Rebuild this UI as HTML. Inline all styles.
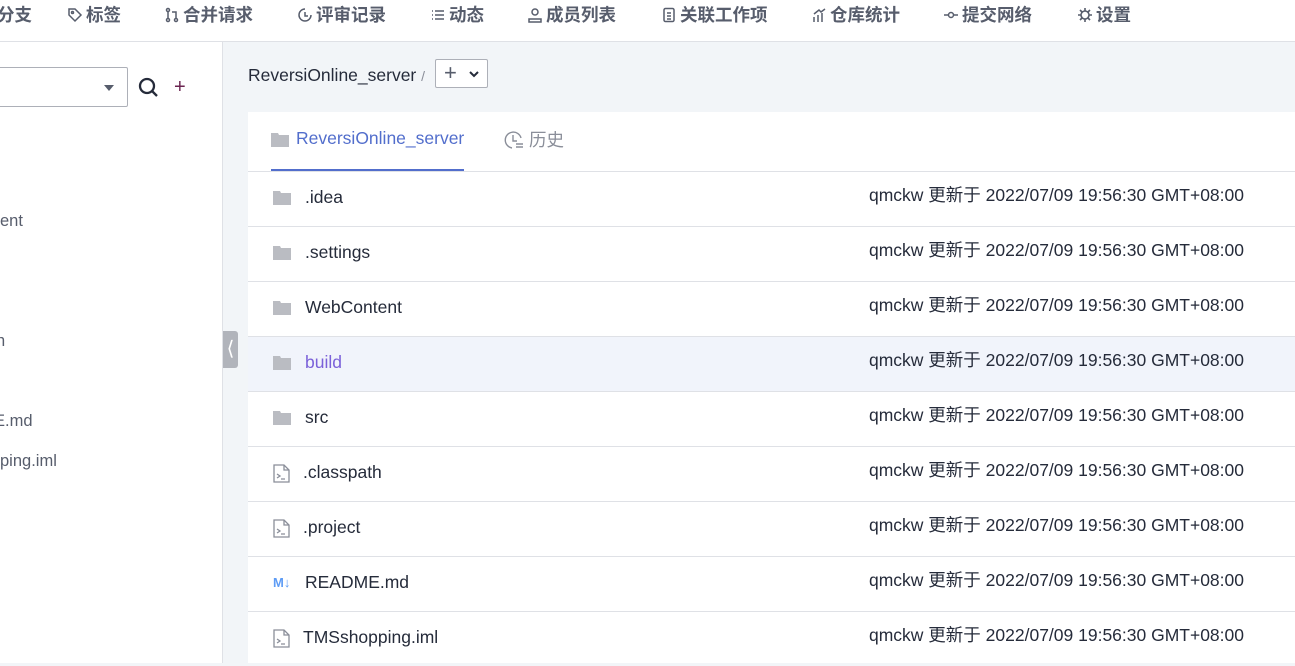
<!DOCTYPE html>
<html><head><meta charset="utf-8"><style>
*{margin:0;padding:0;box-sizing:border-box}
body{width:1295px;height:663px;overflow:hidden;background:#f2f5f8;font-family:"Liberation Sans","Noto Sans CJK SC",sans-serif;position:relative;color:#252b3a}
.nav{position:absolute;left:0;top:0;width:1295px;height:42px;background:#fff;border-bottom:1px solid #dfe1e6}
.ni{position:absolute;top:2px;font-size:17.5px;font-weight:bold;color:#575d6c;display:flex;align-items:center;gap:3px;white-space:nowrap}
.ni svg{width:16px;height:16px}
.left{position:absolute;left:0;top:42px;width:223px;height:621px;background:#fff;border-right:1px solid #dfe1e6}
.lt{position:absolute;font-size:16.5px;color:#575d6c}
.card{position:absolute;left:248px;top:112px;width:1047px;height:551px;background:#fff}
.row{position:absolute;left:0;width:1047px;height:55px;border-top:1px solid #dfe1e6}
.row .nm{position:absolute;left:57px;top:15px;font-size:17.5px;color:#252b3a}
.row .dt{position:absolute;left:621px;top:10px;font-size:17.5px;color:#252b3a}
.row .ic{position:absolute;left:25px;top:18px}
</style></head><body>
<div class="nav">
<div class="ni" style="left:-3px">分支</div>
<div class="ni" style="left:67px"><svg viewBox="0 0 16 16" fill="none" stroke="#575d6c" stroke-width="1.5"><path d="M2 2h6l6 6-6 6-6-6z"/><circle cx="5.5" cy="5.5" r="1"/></svg>标签</div>
<div class="ni" style="left:164px"><svg viewBox="0 0 16 16" fill="none" stroke="#575d6c" stroke-width="1.5"><circle cx="4" cy="3" r="1.5"/><circle cx="4" cy="13" r="1.5"/><circle cx="12" cy="13" r="1.5"/><path d="M4 5v6M12 11V5H8"/></svg>合并请求</div>
<div class="ni" style="left:297px"><svg viewBox="0 0 16 16" fill="none" stroke="#575d6c" stroke-width="1.5"><path d="M14 8A6 6 0 1 1 8 2"/><path d="M8 5v4h3"/></svg>评审记录</div>
<div class="ni" style="left:430px"><svg viewBox="0 0 16 16" fill="none" stroke="#575d6c" stroke-width="1.5"><path d="M2 4h1M2 8h1M2 12h1M5 4h9M5 8h9M5 12h9"/></svg>动态</div>
<div class="ni" style="left:527px"><svg viewBox="0 0 16 16" fill="none" stroke="#575d6c" stroke-width="1.5"><circle cx="8" cy="5" r="3"/><path d="M2 15v-3h12v3z"/></svg>成员列表</div>
<div class="ni" style="left:661px"><svg viewBox="0 0 16 16" fill="none" stroke="#575d6c" stroke-width="1.5"><rect x="3" y="1.5" width="10" height="13" rx="1.5"/><path d="M6 6h4M6 9h4M6 12h4"/></svg>关联工作项</div>
<div class="ni" style="left:811px"><svg viewBox="0 0 16 16" fill="none" stroke="#575d6c" stroke-width="1.5"><path d="M3 15v-5M7 15V8M11 15V6M3 7l5-4 2 2 4-3"/></svg>仓库统计</div>
<div class="ni" style="left:943px"><svg viewBox="0 0 16 16" fill="none" stroke="#575d6c" stroke-width="1.5"><circle cx="8" cy="8" r="2.5"/><path d="M1 8h4.5M10.5 8H15"/></svg>提交网络</div>
<div class="ni" style="left:1077px"><svg viewBox="0 0 16 16" fill="none" stroke="#575d6c" stroke-width="1.6"><circle cx="8" cy="8" r="4"/><path d="M8 1v3M8 12v3M1 8h3M12 8h3M3 3l2 2M11 11l2 2M3 13l2-2M11 5l2-2"/></svg>设置</div>
</div>
<div class="left">
<div style="position:absolute;left:-5px;top:25px;width:133px;height:40px;border:1px solid #adb0b8;border-radius:2px"></div>
<div style="position:absolute;left:104px;top:43px;border-left:5px solid transparent;border-right:5px solid transparent;border-top:6px solid #575d6c"></div>
<svg style="position:absolute;left:138px;top:35px" width="22" height="22" viewBox="0 0 22 22" fill="none" stroke="#252b3a" stroke-width="2.3"><circle cx="9" cy="9" r="7"/><path d="M14 14l5 5"/></svg>
<div style="position:absolute;left:174px;top:34px;font-size:20px;color:#6b2450">+</div>
<div class="lt" style="left:0;top:170px">ent</div>
<div class="lt" style="left:-4px;top:290px">n</div>
<div class="lt" style="left:-6px;top:370px">E.md</div>
<div class="lt" style="left:0;top:410px">ping.iml</div>
</div>
<div style="position:absolute;left:223px;top:331px;width:15px;height:37px;background:#b1b4bb;border-radius:0 3px 3px 0;color:#fff;font-size:20px;line-height:37px;text-align:center">&#10216;</div>
<div style="position:absolute;left:248px;top:65px;font-size:17.5px;color:#252b3a">ReversiOnline_server <span style="color:#8a8e99;font-size:14px">/</span></div>
<div style="position:absolute;left:435px;top:59px;width:53px;height:29px;border:1px solid #adb0b8;border-radius:2px;background:#fff;font-size:22px;line-height:26px;padding-left:8px;color:#575d6c">+<svg style="position:absolute;left:33px;top:10px" width="10" height="8" viewBox="0 0 10 8" fill="none" stroke="#252b3a" stroke-width="2"><path d="M1 2l4 4 4-4"/></svg></div>
<div class="card">
<svg style="position:absolute;left:23px;top:20px" width="18" height="15" viewBox="0 0 18 15"><path d="M0 1h7l1 2h10v12H0z" fill="#babcc2"/></svg>
<div style="position:absolute;left:48px;top:16px;font-size:17.5px;color:#526ecc">ReversiOnline_server</div>
<div style="position:absolute;left:23px;top:57px;width:193px;height:2px;background:#526ecc"></div>
<svg style="position:absolute;left:255px;top:17px" width="22" height="22" viewBox="0 0 22 22" fill="none" stroke="#8a8e99" stroke-width="1.4"><path d="M18 9A8 8 0 1 0 9 19"/><path d="M10 6v6h4M13 15h7M13 18h7"/></svg>
<div style="position:absolute;left:281px;top:15px;font-size:17.5px;color:#8a8e99">历史</div>
<div class="row" style="top:59px"><svg class="ic" width="18" height="15" viewBox="0 0 18 15"><path d="M0 1h7l1 2h10v12H0z" fill="#babcc2"/></svg><div class="nm">.idea</div><div class="dt">qmckw 更新于 2022/07/09 19:56:30 GMT+08:00</div></div>
<div class="row" style="top:114px"><svg class="ic" width="18" height="15" viewBox="0 0 18 15"><path d="M0 1h7l1 2h10v12H0z" fill="#babcc2"/></svg><div class="nm">.settings</div><div class="dt">qmckw 更新于 2022/07/09 19:56:30 GMT+08:00</div></div>
<div class="row" style="top:169px"><svg class="ic" width="18" height="15" viewBox="0 0 18 15"><path d="M0 1h7l1 2h10v12H0z" fill="#babcc2"/></svg><div class="nm">WebContent</div><div class="dt">qmckw 更新于 2022/07/09 19:56:30 GMT+08:00</div></div>
<div class="row" style="top:224px;background:#f1f4fb"><svg class="ic" width="18" height="15" viewBox="0 0 18 15"><path d="M0 1h7l1 2h10v12H0z" fill="#babcc2"/></svg><div class="nm" style="color:#7b61d9">build</div><div class="dt">qmckw 更新于 2022/07/09 19:56:30 GMT+08:00</div></div>
<div class="row" style="top:279px"><svg class="ic" width="18" height="15" viewBox="0 0 18 15"><path d="M0 1h7l1 2h10v12H0z" fill="#babcc2"/></svg><div class="nm">src</div><div class="dt">qmckw 更新于 2022/07/09 19:56:30 GMT+08:00</div></div>
<div class="row" style="top:334px"><svg class="ic" style="top:17px" width="17" height="19" viewBox="0 0 17 19" fill="none" stroke="#8a8e99" stroke-width="1.3"><path d="M1 1h10l5 5v12H1z"/><path d="M11 1v5h5M4 10l3 2-3 2M8 15h4"/></svg><div class="nm" style="left:55px">.classpath</div><div class="dt">qmckw 更新于 2022/07/09 19:56:30 GMT+08:00</div></div>
<div class="row" style="top:389px"><svg class="ic" style="top:17px" width="17" height="19" viewBox="0 0 17 19" fill="none" stroke="#8a8e99" stroke-width="1.3"><path d="M1 1h10l5 5v12H1z"/><path d="M11 1v5h5M4 10l3 2-3 2M8 15h4"/></svg><div class="nm" style="left:55px">.project</div><div class="dt">qmckw 更新于 2022/07/09 19:56:30 GMT+08:00</div></div>
<div class="row" style="top:444px"><div style="position:absolute;left:25px;top:18px;font-size:13px;font-weight:bold;color:#5e9cf5">M&#8595;</div><div class="nm">README.md</div><div class="dt">qmckw 更新于 2022/07/09 19:56:30 GMT+08:00</div></div>
<div class="row" style="top:499px"><svg class="ic" style="top:17px" width="17" height="19" viewBox="0 0 17 19" fill="none" stroke="#8a8e99" stroke-width="1.3"><path d="M1 1h10l5 5v12H1z"/><path d="M11 1v5h5M4 10l3 2-3 2M8 15h4"/></svg><div class="nm" style="left:55px">TMSshopping.iml</div><div class="dt">qmckw 更新于 2022/07/09 19:56:30 GMT+08:00</div></div>
</div>
</body></html>
